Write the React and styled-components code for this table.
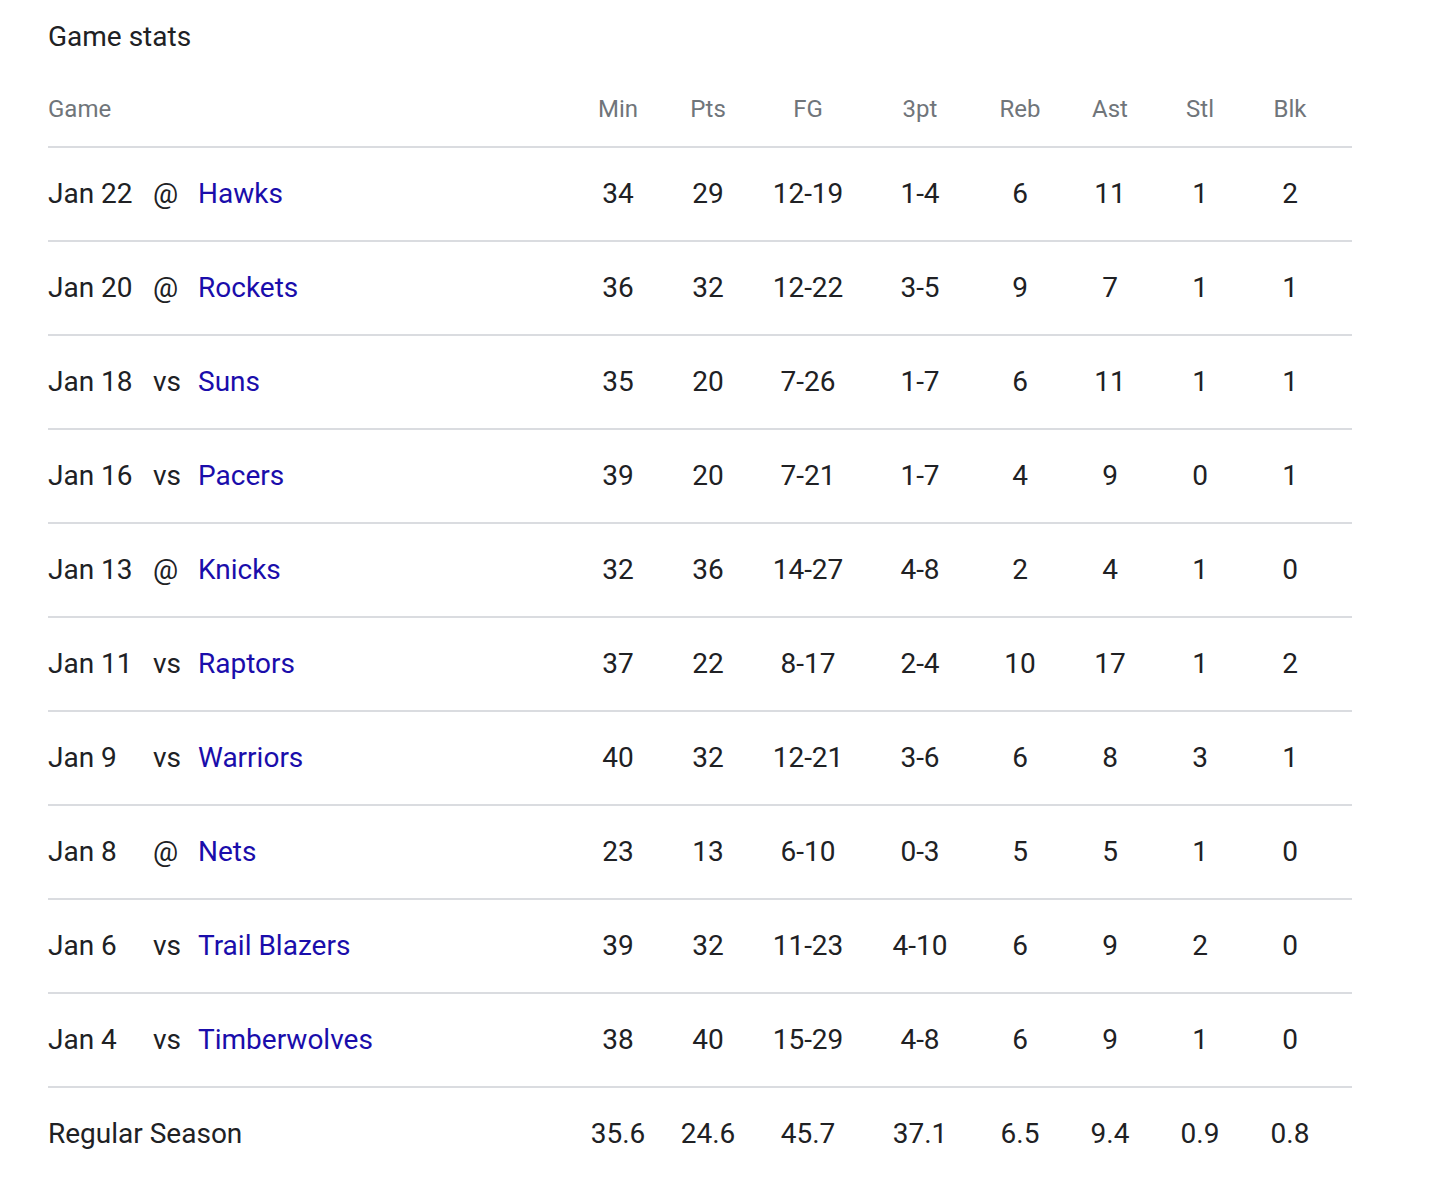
import React from "react";
import styled, { createGlobalStyle } from "styled-components";

const GlobalStyle = createGlobalStyle`
  body {
    margin: 0;
    background: #fff;
    font-family: Roboto, "Liberation Sans", Arial, sans-serif;
    color: #202124;
  }
`;

const cols = "525px 90px 90px 110px 114px 86px 94px 86px 94px 15px";

const Page = styled.div`
  width: 1304px;
  padding: 19px 48px 12px;
`;

const Title = styled.h2`
  margin: 0;
  font-size: 28px;
  font-weight: 400;
  line-height: 36px;
  color: #202124;
`;

const Row = styled.div`
  display: grid;
  grid-template-columns: ${cols};
  align-items: ${(p) => (p.$head ? "end" : "center")};
  height: ${(p) => (p.$foot ? "92px" : p.$head ? "93px" : "92px")};
  padding-bottom: ${(p) => (p.$head ? "21px" : "0")};
  box-sizing: ${(p) => (p.$head ? "border-box" : "content-box")};
  border-bottom: ${(p) => (p.$foot ? "none" : "2px solid #dadce0")};
  font-size: ${(p) => (p.$head ? "24px" : "28px")};
  line-height: 32px;
  color: ${(p) => (p.$head ? "#70757a" : "#202124")};
  white-space: nowrap;
`;

const GameCell = styled.div`
  display: flex;
  align-items: center;
`;

const DateText = styled.span`
  width: 105px;
`;

const Where = styled.span`
  width: 45px;
`;

const Team = styled.a`
  color: #1a0dab;
  text-decoration: none;
  cursor: pointer;
`;

const Num = styled.div`
  text-align: center;
`;

const heads = ["Min", "Pts", "FG", "3pt", "Reb", "Ast", "Stl", "Blk"];

const games = [
  ["Jan 22", "@", "Hawks", ["34", "29", "12-19", "1-4", "6", "11", "1", "2"]],
  ["Jan 20", "@", "Rockets", ["36", "32", "12-22", "3-5", "9", "7", "1", "1"]],
  ["Jan 18", "vs", "Suns", ["35", "20", "7-26", "1-7", "6", "11", "1", "1"]],
  ["Jan 16", "vs", "Pacers", ["39", "20", "7-21", "1-7", "4", "9", "0", "1"]],
  ["Jan 13", "@", "Knicks", ["32", "36", "14-27", "4-8", "2", "4", "1", "0"]],
  ["Jan 11", "vs", "Raptors", ["37", "22", "8-17", "2-4", "10", "17", "1", "2"]],
  ["Jan 9", "vs", "Warriors", ["40", "32", "12-21", "3-6", "6", "8", "3", "1"]],
  ["Jan 8", "@", "Nets", ["23", "13", "6-10", "0-3", "5", "5", "1", "0"]],
  ["Jan 6", "vs", "Trail Blazers", ["39", "32", "11-23", "4-10", "6", "9", "2", "0"]],
  ["Jan 4", "vs", "Timberwolves", ["38", "40", "15-29", "4-8", "6", "9", "1", "0"]],
];

const season = ["35.6", "24.6", "45.7", "37.1", "6.5", "9.4", "0.9", "0.8"];

export default function App() {
  return (
    <Page>
      <GlobalStyle />
      <Title>Game stats</Title>
      <Row $head>
        <div>Game</div>
        {heads.map((h) => (
          <Num key={h}>{h}</Num>
        ))}
      </Row>
      {games.map(([date, where, team, stats]) => (
        <Row key={date}>
          <GameCell>
            <DateText>{date}</DateText>
            <Where>{where}</Where>
            <Team>{team}</Team>
          </GameCell>
          {stats.map((s, i) => (
            <Num key={i}>{s}</Num>
          ))}
        </Row>
      ))}
      <Row $foot>
        <div>Regular Season</div>
        {season.map((s, i) => (
          <Num key={i}>{s}</Num>
        ))}
      </Row>
    </Page>
  );
}
